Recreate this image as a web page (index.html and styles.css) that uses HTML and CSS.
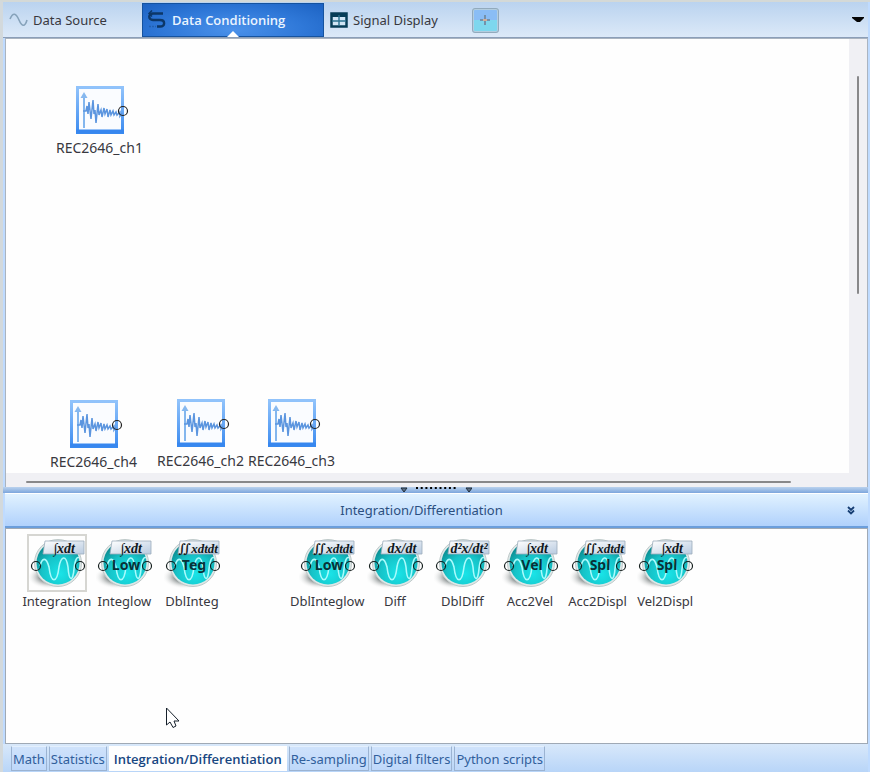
FILE: index.html
```html
<!DOCTYPE html>
<html lang="en">
<head>
<meta charset="utf-8">
<title>Data Conditioning</title>
<meta name="viewport" content="width=device-width, initial-scale=1">
<link rel="stylesheet" href="styles.css">
</head>
<body>
<svg class="defs" aria-hidden="true">
  <defs>
    <linearGradient id="frame" x1="0" y1="0" x2="0" y2="1"><stop offset="0" stop-color="#91c3fb"/><stop offset="1" stop-color="#3d8cf0"/></linearGradient>
    <radialGradient id="ball" cx=".55" cy=".75" r=".7"><stop offset="0" stop-color="#19e4e8"/><stop offset=".6" stop-color="#16c3c8"/><stop offset="1" stop-color="#0b8f94"/></radialGradient>
    <linearGradient id="plate" x1="0" y1="0" x2="1" y2="1"><stop offset="0" stop-color="#ffffff"/><stop offset="1" stop-color="#b9cbe0"/></linearGradient>
    <radialGradient id="shade"><stop offset=".4" stop-color="#7d8484"/><stop offset="1" stop-color="#ffffff" stop-opacity="0"/></radialGradient>
    <symbol id="record" viewBox="0 0 54 48">
      <rect x="1.5" y="1.5" width="45" height="45" fill="#fafcff" stroke="url(#frame)" stroke-width="3"/>
      <path d="M0 45.500H48" stroke="#3787ef" stroke-width="4"/>
      <path d="M8 42V10" stroke="#5b9fe8" stroke-width="1.500"/>
      <path d="M4.500 12L8 6l3.500 6z" fill="#86b8ef"/>
      <path d="M7 25h3l1-5 1 8 1-12 2 17 2-19 1 14 1-4 1 13 2-19 1 11 2-5 1 7 2-9 1 6 2-5 1 8 2-7 1 5 2-4 1 4 2-3 1 3 3-3v4l2-3" fill="none" stroke="#5b95df" stroke-width="1.500"/>
      <circle cx="47" cy="25" r="4.500" fill="none" stroke="#222" stroke-width="1.200"/>
    </symbol>
    <symbol id="operator" viewBox="0 0 56 54">
      <ellipse cx="21" cy="41" rx="23" ry="12" fill="url(#shade)"/>
      <circle cx="29" cy="27" r="23.500" fill="#dfe8e8" stroke="#bfcaca"/>
      <circle cx="29" cy="27" r="21.500" fill="url(#ball)"/>
      <path d="M11 30C13 22 17 20 20 31C22 48 28 48 30 31C32 20 37 18 39 31C40 46 44 46 45 33C46 24 48 20 50 22" fill="none" stroke="#a9fbfc" stroke-width="1.600"/>
      <path d="M16 5H55V18H14z" fill="url(#plate)" stroke="#9cacbb" stroke-width=".8"/>
      <circle cx="7" cy="30" r="4.500" fill="none" stroke="#16201f" stroke-width="1.200"/>
      <circle cx="51" cy="30" r="4.500" fill="none" stroke="#16201f" stroke-width="1.200"/>
    </symbol>
  </defs>
</svg>

<div class="app">
  <nav class="topbar">
    <button class="view source" type="button">
      <svg width="20" height="16" viewBox="0 0 20 16"><path d="M1 7C4 0 7 1 10 8S16 15 18 8" fill="none" stroke="#86a2ba" stroke-width="1.600"/></svg>
      Data Source
    </button>
    <button class="view current" type="button">
      <svg width="20" height="20" viewBox="0 0 20 20"><path d="M16 3.500H6C1 3.500 1 10 6 10H13C18.500 10 18.500 16.500 13 16.500H10" fill="none" stroke="#0c3768" stroke-width="2.400"/><path d="M5 .5L2 3.500l3 3" fill="none" stroke="#0c3768" stroke-width="1.500"/><path d="M2 16.500h7" stroke="#0c3768" stroke-width="1.500" stroke-dasharray="2 1" opacity=".3"/></svg>
      Data Conditioning
    </button>
    <button class="view display" type="button">
      <svg width="18" height="16" viewBox="0 0 18 16"><rect x="1.500" y="1.500" width="15" height="13" fill="#d0e5f5" stroke="#073d57" stroke-width="2.500"/><path d="M1 3H17" stroke="#073d57" stroke-width="4"/><path d="M9 3V14M2 9H16" stroke="#2a7190" stroke-width="1.400"/></svg>
      Signal Display
    </button>
    <button class="add" type="button" aria-label="Add view">
      <svg width="12" height="12" viewBox="0 0 12 12"><path d="M6 1v10M1 6h10" stroke="#7391ab" stroke-width="2"/><path d="M4 6h4" stroke="#d1ae9a" stroke-width="2"/></svg>
    </button>
    <button class="more" type="button" aria-label="More views"><svg width="12" height="6" viewBox="0 0 12 6"><path d="M0 0h12v1L8 5H5L0 1z" fill="#050505"/></svg></button>
  </nav>

  <main class="workspace">
    <div class="canvas">
      <figure class="node ch1"><svg width="54" height="48"><use href="#record"/></svg><figcaption>REC2646_ch1</figcaption></figure>
      <figure class="node ch4"><svg width="54" height="48"><use href="#record"/></svg><figcaption>REC2646_ch4</figcaption></figure>
      <figure class="node ch2"><svg width="54" height="48"><use href="#record"/></svg><figcaption>REC2646_ch2</figcaption></figure>
      <figure class="node ch3"><svg width="54" height="48"><use href="#record"/></svg><figcaption>REC2646_ch3</figcaption></figure>
    </div>
    <div class="scroll-y"><span></span></div>
    <div class="scroll-x"><span></span></div>
  </main>

  <div class="splitter">
    <svg width="72" height="6" viewBox="0 0 72 6"><path d="M1 1h6L4 5zM66 1h6l-3 4z" fill="#5d7188" stroke="#1c2a38"/><path d="M16 1h40" stroke="#000" stroke-width="2" stroke-dasharray="2 2.700"/></svg>
  </div>

  <header class="heading">
    <h1>Integration/Differentiation</h1>
    <button type="button" aria-label="Collapse"><svg width="8" height="9" viewBox="0 0 8 9"><path d="M1 1l3 3 3-3M1 4.500l3 3 3-3" fill="none" stroke="#173f74" stroke-width="1.800"/></svg></button>
  </header>

  <section class="palette">
    <div class="operators">
      <button class="op chosen" type="button"><svg width="56" height="54"><use href="#operator"/><text class="formula" x="35" y="17">∫xdt</text></svg><span>Integration</span></button>
      <button class="op" type="button"><svg width="56" height="54"><use href="#operator"/><text class="formula" x="35" y="17">∫xdt</text><text class="word" x="30" y="34">Low</text></svg><span>Integlow</span></button>
      <button class="op" type="button"><svg width="56" height="54"><use href="#operator"/><text class="formula long" x="34" y="17">∬xdtdt</text><text class="word" x="30" y="34">Teg</text></svg><span>DblInteg</span></button>
      <button class="op after-gap" type="button"><svg width="56" height="54"><use href="#operator"/><text class="formula long" x="34" y="17">∬xdtdt</text><text class="word" x="30" y="34">Low</text></svg><span>DblInteglow</span></button>
      <button class="op" type="button"><svg width="56" height="54"><use href="#operator"/><text class="formula" x="35" y="17">dx/dt</text></svg><span>Diff</span></button>
      <button class="op" type="button"><svg width="56" height="54"><use href="#operator"/><text class="formula" x="35" y="17">d²x/dt²</text></svg><span>DblDiff</span></button>
      <button class="op" type="button"><svg width="56" height="54"><use href="#operator"/><text class="formula" x="35" y="17">∫xdt</text><text class="word" x="30" y="34">Vel</text></svg><span>Acc2Vel</span></button>
      <button class="op" type="button"><svg width="56" height="54"><use href="#operator"/><text class="formula long" x="34" y="17">∬xdtdt</text><text class="word" x="30" y="34">Spl</text></svg><span>Acc2Displ</span></button>
      <button class="op" type="button"><svg width="56" height="54"><use href="#operator"/><text class="formula" x="35" y="17">∫xdt</text><text class="word" x="30" y="34">Spl</text></svg><span>Vel2Displ</span></button>
    </div>
    <svg class="pointer" width="16" height="22" viewBox="0 0 16 22"><path d="M1.500 1V18L5 15L8 20.500L11 19L9 14H14z" fill="#fff" stroke="#16202b"/></svg>
  </section>

  <nav class="groups">
    <button type="button">Math</button>
    <button type="button">Statistics</button>
    <button class="open" type="button">Integration/Differentiation</button>
    <button type="button">Re-sampling</button>
    <button type="button">Digital filters</button>
    <button type="button">Python scripts</button>
  </nav>
</div>
</body>
</html>
```
FILE: styles.css
```css
* { box-sizing: border-box; }

body {
  margin: 0;
  font: 13px/18px "Noto Sans", "Open Sans", sans-serif;
  color: #38383e;
  background: #bfdbff;
}

button {
  font: inherit;
  color: inherit;
  background: none;
  border: 0;
  padding: 0;
}

svg { display: block; flex: none; }
.defs { position: absolute; width: 0; height: 0; }

.app {
  display: flex;
  flex-direction: column;
  min-height: 100vh;
  border-top: 2px solid #d4d9d7;
  border-left: 3px solid #d3d9dc;
  padding-right: 2px;
}

/* View tabs */
.topbar {
  display: flex;
  align-items: stretch;
  height: 36px;
  padding-top: 1px;
  background: linear-gradient(#bad3ef, #dce9f8);
  border-bottom: 1px solid #8b9eb8;
}
.view { display: flex; align-items: center; white-space: nowrap; }
.source { width: 139px; padding-left: 6px; gap: 4px; }
.current {
  position: relative;
  width: 182px;
  padding-left: 4px;
  gap: 5px;
  color: #eaf4ff;
  font-family: "Open Sans", "Noto Sans", sans-serif;
  font-weight: 600;
  background: radial-gradient(ellipse at 50% 80%, #4a91ea, #2f78d8 55%, #1c62c2);
  border: 1px solid #15539f;
}
.current::after {
  content: "";
  position: absolute;
  bottom: -1px;
  left: 50%;
  margin-left: -6px;
  border: 6px solid transparent;
  border-top: 0;
  border-bottom-color: #fff;
}
.display { padding-left: 6px; gap: 5px; }
.add {
  align-self: center;
  display: grid;
  place-items: center;
  width: 27px;
  height: 25px;
  margin-left: 34px;
  background: linear-gradient(#8abdf5 50%, #7ed7ee 50%);
  border: 2px solid #b3cddf;
  outline: 1px solid #92aabd;
  outline-offset: -1px;
  border-radius: 3px;
}
.more { margin-left: auto; padding-right: 4px; }

/* Canvas and its scroll bars */
.workspace {
  flex: 449 0 0;
  display: grid;
  grid-template: minmax(0, 1fr) 14px / minmax(0, 1fr) 18px;
  margin-left: 2px;
  border: 1px solid #aab4c0;
  border-bottom: 0;
  background: #f0f0f4;
}
.canvas { position: relative; background: #fefefe; min-height: 434px; }
.node {
  position: absolute;
  margin: 0;
  display: flex;
  flex-direction: column;
  align-items: center;
  gap: 5px;
  font-size: 14px;
}
.ch1 { left: 50px; top: 47px; }
.ch4 { left: 44px; top: 361px; }
.ch2 { left: 151px; top: 360px; }
.ch3 { left: 242px; top: 360px; }
.node svg { margin-left: 8px; }
.scroll-y { padding: 37px 0 0 8px; }
.scroll-y span { display: block; width: 2px; height: 55%; background: #88888a; border-radius: 1px; }
.scroll-x { padding: 8px 0 0 20px; }
.scroll-x span { display: block; width: 93%; height: 2px; background: #88888a; border-radius: 1px; }

.splitter {
  display: flex;
  justify-content: center;
  height: 6px;
  background: linear-gradient(#bad2ee, #7da6dc);
}

.heading {
  display: flex;
  align-items: center;
  height: 35px;
  margin-left: 2px;
  padding-right: 13px;
  color: #2b4f80;
  background: linear-gradient(#e1f2ff, #b0d1fc);
  border-top: 1px solid #fff;
  border-bottom: 2px solid #6b9edc;
}
.heading h1 { flex: 1; margin: 0; padding-right: 9px; font: inherit; text-align: center; }

/* Operator palette */
.palette {
  position: relative;
  flex: 216 0 0;
  margin-left: 2px;
  padding: 5px 0 0 17px;
  background: #fefefe;
  border: 1px solid #9fa9b5;
}
.operators {
  display: grid;
  grid-template-columns: repeat(10, minmax(0, 1fr));
  max-width: 676px;
}
.op { display: flex; flex-direction: column; align-items: center; white-space: nowrap; }
.op svg { width: 60px; height: 58px; padding: 2px; overflow: visible; }
.chosen svg { border: 2px solid #d6d6d2; padding: 0; }
.after-gap { grid-column: 5; }
.formula {
  font: italic 700 14px "Liberation Serif", "DejaVu Serif", serif;
  fill: #101820;
  text-anchor: middle;
}
.formula.long { font-size: 13px; }
.word {
  font: 700 14px "Noto Sans", sans-serif;
  fill: #073238;
  text-anchor: middle;
}
.pointer { position: absolute; left: 159px; top: 178px; }

/* Group tabs */
.groups {
  display: flex;
  height: 28px;
  padding: 2px 0 1px 8px;
  gap: 2px;
  color: #315f9c;
  background: linear-gradient(#d8e8fa, #b8d5f8);
}
.groups button {
  padding: 0 1px;
  white-space: nowrap;
  background: linear-gradient(#cfe2fb, #bed8fa);
  border: 1px solid #9bb3d2;
  border-top-color: #e3effc;
}
.groups .open {
  padding: 0 4px;
  color: #174681;
  font-family: "Open Sans", "Noto Sans", sans-serif;
  font-weight: 600;
  background: #fefefe;
  border-color: #fefefe;
}
```
